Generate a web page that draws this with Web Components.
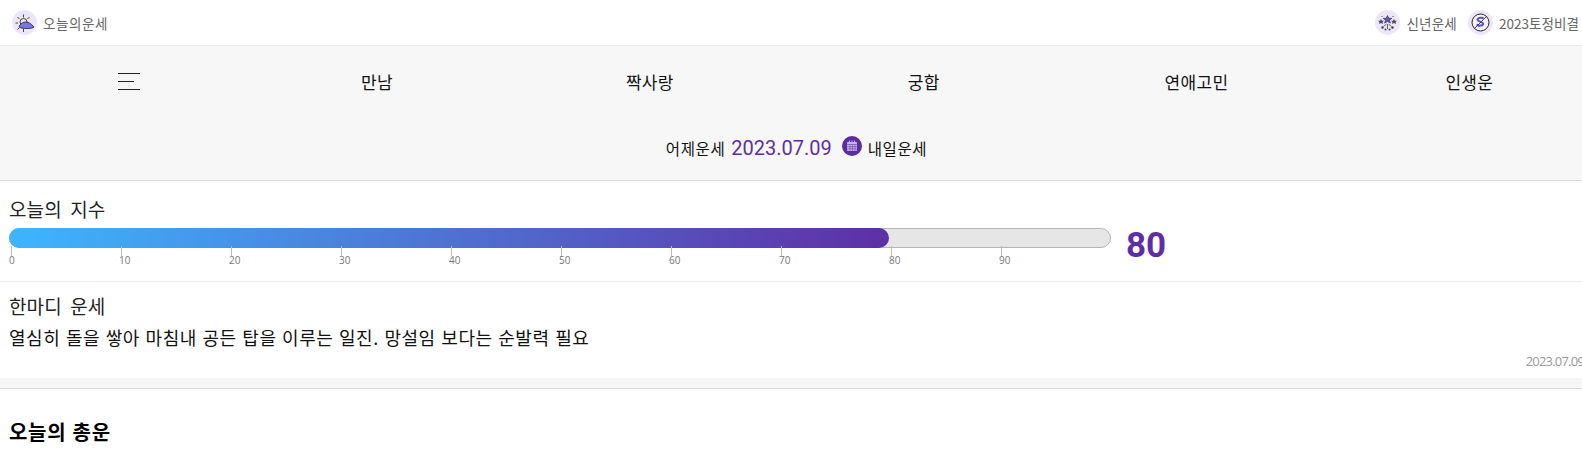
<!DOCTYPE html>
<html lang="ko">
<head>
<meta charset="utf-8">
<title>오늘의 운세</title>
<style>
  html, body { margin: 0; padding: 0; background: #fff; overflow: hidden; }
  body { font-family: "Noto Sans CJK KR", "Noto Sans", sans-serif; color: #111; }
</style>
</head>
<body>
<top-bar></top-bar>
<main-nav></main-nav>
<index-panel value="80"></index-panel>
<word-panel date="2023.07.09">
  <span slot="title">한마디 운세</span>
  열심히 돌을 쌓아 마침내 공든 탑을 이루는 일진. 망설임 보다는 순발력 필요
</word-panel>
<total-head>오늘의 총운</total-head>

<script>
class TopBar extends HTMLElement {
  constructor() {
    super();
    this.attachShadow({ mode: 'open' });
  }
  connectedCallback() {
    this.shadowRoot.innerHTML = `
      <style>
        :host { display: flex; align-items: center; justify-content: space-between; height: 45px; padding: 0 3px 0 12px; background: #fff; border-bottom: 1px solid #eee; font-size: 13.5px; color: #666; letter-spacing: .2px; }
        .group { display: flex; align-items: center; }
        .item { display: flex; align-items: center; gap: 6px; }
        .item + .item { margin-left: 11px; }
        .ico { width: 25px; height: 25px; border-radius: 50%; background: #eee6f8; flex: none; display: block; }
        .home { letter-spacing: .6px; }
        .tight { letter-spacing: .05px; }
      </style>
      <div class="item">
        <svg class="ico" viewBox="0 0 25 25">
          <g stroke="#444" stroke-width="1" fill="none">
            <path d="M11.500 4.500v3M5.500 7l2 2M17.500 7l-2 2M3.500 13h2.500M11.500 19v3M7 18l-1.500 1.500"/>
            <circle cx="11.500" cy="12" r="3.500"/>
          </g>
          <path d="M7 17c1-3.500 4-5 7-5 3 0 5 2 8 5-1 1-3 1.500-7 1.500-4 0-7-.5-8-1.500z" fill="#7b73ea" stroke="#222" stroke-width=".8"/>
        </svg>
        <span class="home">오늘의운세</span>
      </div>
      <div class="group">
        <div class="item">
          <svg class="ico" viewBox="0 0 25 25">
            <path d="M12.500 5.500l1.400 2.800h3l-2.400 1.900.9 2.900-2.900-1.700-2.900 1.700.9-2.900-2.400-1.900h3z" fill="#5f55c8" stroke="#333" stroke-width=".6"/>
            <path d="M6 9.500l.8 1.500h1.600l-1.200 1 .4 1.600-1.600-.9-1.600.9.4-1.600-1.200-1h1.600zM19 9.500l.8 1.500h1.600l-1.200 1 .4 1.600-1.600-.9-1.600.9.4-1.600-1.200-1h1.600z" fill="#4a4290" stroke="#333" stroke-width=".4"/>
            <g fill="#444">
              <circle cx="7.500" cy="17.500" r="1.200"/><circle cx="17.500" cy="17.500" r="1.200"/><circle cx="10.500" cy="19.500" r="1"/><circle cx="14.500" cy="19.500" r="1"/>
              <circle cx="7" cy="6.500" r=".6"/><circle cx="18" cy="6.500" r=".6"/>
            </g>
            <path d="M8.500 16.500l3-2.500M16.500 16.500l-3-2.500M12.500 14v5" stroke="#444" stroke-width=".8" fill="none"/>
          </svg>
          <span>신년운세</span>
        </div>
        <div class="item">
          <svg class="ico" viewBox="0 0 25 25">
            <circle cx="12.500" cy="12.500" r="8.500" fill="#f5f1fb" stroke="#222" stroke-width="1"/>
            <path d="M15.500 8.500c-1-1.200-5.500-1.300-6 1-.4 2.300 5.600 2 5.600 4.300 0 2.300-5 2.300-6.300.7" fill="none" stroke="#5a50b8" stroke-width="2"/>
            <path d="M6.500 18.500L18.500 6.500" stroke="#222" stroke-width=".8"/>
          </svg>
          <span class="tight">2023토정비결</span>
        </div>
      </div>`;
  }
}
customElements.define('top-bar', TopBar);

class MainNav extends HTMLElement {
  constructor() {
    super();
    this.attachShadow({ mode: 'open' });
  }
  connectedCallback() {
    this.shadowRoot.innerHTML = `
      <style>
        :host { display: block; height: 134px; background: #f7f7f7; border-bottom: 1px solid #ddd; font-size: 17px; letter-spacing: .3px; color: #111; }
        .menu { display: flex; align-items: center; height: 70px; padding-left: 118px; }
        .menu span:nth-child(2) { margin-left: 221px; }
        .menu span:nth-child(3) { margin-left: 233px; }
        .menu span:nth-child(4) { margin-left: 234px; }
        .menu span:nth-child(5) { margin-left: 225px; }
        .menu span:nth-child(6) { margin-left: 217px; }
        .burger { width: 22px; height: 17px; display: flex; flex-direction: column; justify-content: space-between; }
        .burger i { display: block; height: 1px; background: #222; }
        .burger i:nth-child(2) { width: 16px; }
        .date { display: flex; justify-content: center; align-items: center; gap: 6px; margin-top: 20px; padding-left: 11px; font-size: 15.500px; letter-spacing: .6px; line-height: 24px; }
        .day { font-family: Roboto, "Liberation Sans", sans-serif; font-size: 20px; letter-spacing: 0; color: #5f2ea6; margin-right: 4px; }
        .cal { width: 20px; height: 20px; display: block; margin-top: -4px; }
      </style>
      <div class="menu">
        <div class="burger"><i></i><i></i><i></i></div>
        <span>만남</span><span>짝사랑</span><span>궁합</span><span>연애고민</span><span>인생운</span>
      </div>
      <div class="date">
        <span>어제운세</span>
        <span class="day">2023.07.09</span>
        <svg class="cal" viewBox="0 0 20 20">
          <circle cx="10" cy="10" r="10" fill="#5a2ca0"/>
          <rect x="5" y="6" width="10" height="9" rx="1" fill="#c8b6e6"/>
          <path d="M7.500 4.500v2.500M10 4.500v2.500M12.500 4.500v2.500" stroke="#c8b6e6" stroke-width="1"/>
          <path d="M5 8.500h10M5 10.700h10M5 12.800h10M8 8.500v6.500M10.500 8.500v6.500M13 8.500v6.500" stroke="#5a2ca0" stroke-width=".5"/>
        </svg>
        <span>내일운세</span>
      </div>`;
  }
}
customElements.define('main-nav', MainNav);

class IndexPanel extends HTMLElement {
  constructor() {
    super();
    this.attachShadow({ mode: 'open' });
  }
  connectedCallback() {
    const value = this.getAttribute('value');
    let ticks = '';
    for (let i = 0; i < 10; i++) {
      ticks += '<div class="tick"><span>' + (i * 10) + '</span></div>';
    }
    this.shadowRoot.innerHTML = `
      <style>
        :host { display: block; height: 101px; padding: 0 0 0 9px; box-sizing: border-box; background: #fff; border-bottom: 1px solid #eee; }
        h3 { margin: 0; padding-top: 14px; font-size: 19px; font-weight: 400; letter-spacing: .1px; word-spacing: 3px; line-height: 28px; color: #222; }
        .row { display: flex; align-items: flex-start; margin-top: 5px; }
        .graph { width: 1102px; flex: none; }
        .track { height: 20px; box-sizing: border-box; border: 1px solid #b5b5b5; border-radius: 10px; background: #e6e6e6; position: relative; }
        .fill { position: absolute; left: -1px; top: -1px; bottom: -1px; width: 880px; border-radius: 10px; background: linear-gradient(100deg, #3db6ff, #5f2ea6); }
        .ticks { display: flex; margin-top: -2px; padding-left: 2px; }
        .tick { width: 110px; height: 10px; border-left: 1px solid #c4b8b0; box-sizing: border-box; font: 10px/10px "Open Sans", sans-serif; color: #777; position: relative; }
        .tick span { position: absolute; left: -3px; top: 9px; }
        .num { margin: -2px 0 0 15px; font: 700 35px/40px Roboto, "Liberation Sans", sans-serif; color: #5f2ea6; }
      </style>
      <h3>오늘의 지수</h3>
      <div class="row">
        <div class="graph">
          <div class="track"><div class="fill"></div></div>
          <div class="ticks">${ticks}</div>
        </div>
        <div class="num">${value}</div>
      </div>`;
  }
}
customElements.define('index-panel', IndexPanel);

class WordPanel extends HTMLElement {
  constructor() {
    super();
    this.attachShadow({ mode: 'open' });
  }
  connectedCallback() {
    const date = this.getAttribute('date');
    this.shadowRoot.innerHTML = `
      <style>
        :host { display: flex; flex-direction: column; height: 107px; box-sizing: border-box; background: #fff; border-bottom: 1px solid #ddd; overflow: hidden; }
        .title { padding: 10px 0 0 9px; font-size: 19px; letter-spacing: .1px; word-spacing: 3px; line-height: 28px; color: #222; }
        .text { padding: 5px 0 0 9px; font-size: 18px; letter-spacing: .55px; line-height: 24px; color: #111; }
        .date { text-align: right; font: 13px/16px "Open Sans", sans-serif; color: #999; letter-spacing: -.8px; margin-top: 4px; margin-right: -2px; }
        .band { height: 10px; background: #f6f6f6; margin-top: auto; flex: none; }
      </style>
      <div class="title"><slot name="title"></slot></div>
      <div class="text"><slot></slot></div>
      <div class="date">${date}</div>
      <div class="band"></div>`;
  }
}
customElements.define('word-panel', WordPanel);

class TotalHead extends HTMLElement {
  constructor() {
    super();
    this.attachShadow({ mode: 'open' });
  }
  connectedCallback() {
    this.shadowRoot.innerHTML = `
      <style>
        :host { display: block; padding: 28px 0 0 9px; font-size: 20px; font-weight: 700; letter-spacing: .7px; line-height: 30px; color: #000; }
      </style>
      <slot></slot>`;
  }
}
customElements.define('total-head', TotalHead);
</script>
</body>
</html>
